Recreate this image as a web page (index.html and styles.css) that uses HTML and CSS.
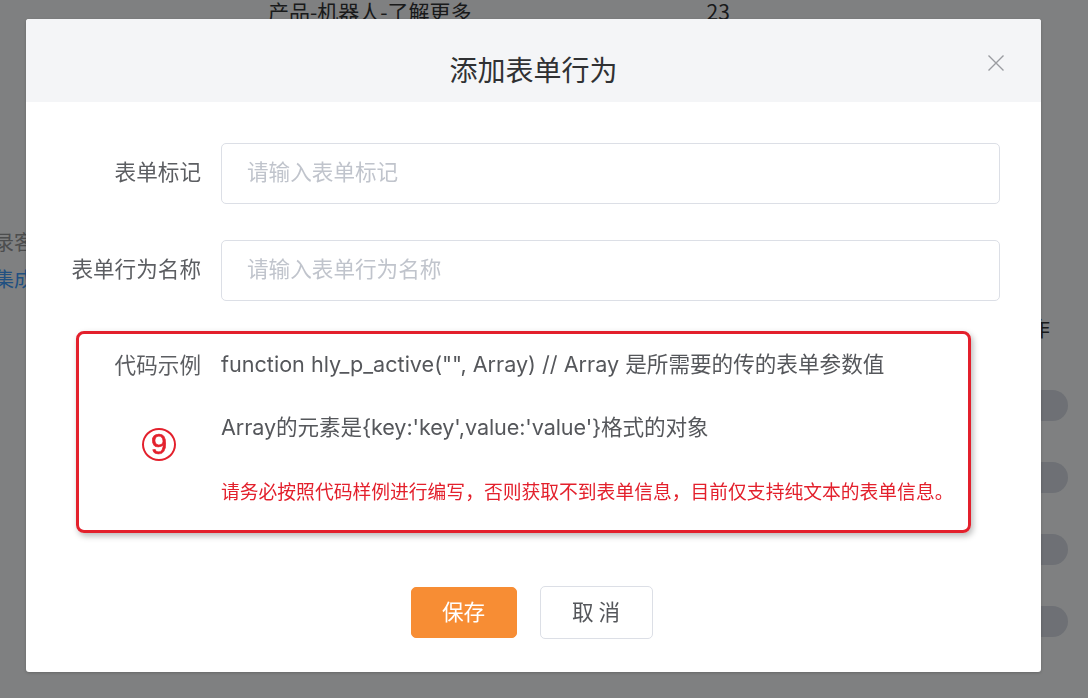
FILE: index.html
```html
<!DOCTYPE html>
<html lang="zh-CN">
<head>
<meta charset="utf-8">
<title>添加表单行为</title>
<link rel="stylesheet" href="styles.css">
</head>
<body>
<div class="page">
  <div class="top-row">
    <span class="cell-name">产品-机器人-了解更多</span>
    <span class="cell-count">23</span>
  </div>
  <div class="mid">
    <div class="left-col">
      <div class="left-gray">录客</div>
      <div class="left-blue">集成</div>
    </div>
    <div class="right-col">
      <div class="col-head">操作</div>
      <div class="pill"></div>
      <div class="pill"></div>
      <div class="pill"></div>
      <div class="pill"></div>
    </div>
  </div>
</div>

<div class="mask"></div>

<div class="dialog">
  <div class="dialog-header">
    <span class="dialog-title">添加表单行为</span>
    <button class="dialog-close" aria-label="关闭">
      <svg width="18" height="18" viewBox="0 0 18 18"><path d="M1.5 1.5L16.5 16.5M16.5 1.5L1.5 16.5" stroke="#9a9ca0" stroke-width="1.4" fill="none"/></svg>
    </button>
  </div>
  <div class="dialog-body">
    <div class="form-item">
      <label class="form-label">表单标记</label>
      <input class="form-input" type="text" placeholder="请输入表单标记">
    </div>
    <div class="form-item">
      <label class="form-label">表单行为名称</label>
      <input class="form-input" type="text" placeholder="请输入表单行为名称">
    </div>
    <div class="code-box">
      <div class="code-label-col">
        <div class="code-label">代码示例</div>
        <div class="circled" aria-label="⑨">9</div>
      </div>
      <div class="code-content">
        <div class="code-line">function hly_p_active("", Array) // Array 是所需要的传的表单参数值</div>
        <div class="code-line second">Array的元素是{key:'key',value:'value'}格式的对象</div>
        <div class="code-warn">请务必按照代码样例进行编写，否则获取不到表单信息，目前仅支持纯文本的表单信息。</div>
      </div>
    </div>
  </div>
  <div class="dialog-footer">
    <button class="btn btn-primary">保存</button>
    <button class="btn btn-default">取 消</button>
  </div>
</div>
</body>
</html>
```
FILE: styles.css
```css
* { box-sizing: border-box; }
html, body {
  margin: 0;
  padding: 0;
  width: 1088px;
  height: 698px;
  overflow: hidden;
  font-family: "Noto Sans CJK SC", "Liberation Sans", sans-serif;
}
.page {
  width: 1088px;
  height: 698px;
  background: #ffffff;
  overflow: hidden;
}
.top-row {
  display: flex;
  margin-top: -4px;
  padding-left: 268px;
  font-size: 21px;
  line-height: 30px;
  color: #333;
}
.cell-count { margin-left: 235px; }
.mid {
  display: flex;
  justify-content: space-between;
}
.left-col {
  margin-left: -6px;
  padding-top: 197px;
  font-size: 20px;
  line-height: 37px;
}
.left-gray { color: #999; }
.left-blue { color: #409eff; }
.right-col {
  display: flex;
  flex-direction: column;
  align-items: flex-end;
  padding-top: 286px;
  padding-right: 20px;
}
.col-head {
  font-size: 21px;
  line-height: 30px;
  color: #333;
  margin-right: 18px;
}
.pill {
  width: 62px;
  height: 31px;
  border-radius: 16px;
  background: #dcdfe6;
  margin-top: 41px;
}
.col-head + .pill { margin-top: 48px; }

.mask {
  position: fixed;
  inset: 0;
  background: rgba(0, 1, 4, 0.5);
}

.dialog {
  position: absolute;
  left: 26px;
  top: 19px;
  width: 1015px;
  height: 653px;
  background: #fff;
  border-radius: 3px;
  display: flex;
  flex-direction: column;
  box-shadow: 0 1px 3px rgba(0,0,0,0.2);
}
.dialog-header {
  height: 83px;
  background: #f4f5f7;
  display: flex;
  align-items: center;
  justify-content: center;
  position: relative;
  border-radius: 3px 3px 0 0;
}
.dialog-title {
  font-size: 28px;
  color: #303133;
  line-height: 36px;
  margin-top: 16px;
}
.dialog-close {
  position: absolute;
  right: 36px;
  top: 35px;
  border: 0;
  background: none;
  padding: 0;
  width: 18px;
  height: 18px;
}
.dialog-close svg { display: block; }

.dialog-body {
  padding-top: 41px;
  flex: 1;
}
.form-item {
  display: flex;
  align-items: flex-start;
  margin-bottom: 36px;
}
.form-label {
  width: 195px;
  padding-right: 20px;
  text-align: right;
  font-size: 21.6px;
  line-height: 55px;
  padding-bottom: 6px;
  color: #5c5e62;
  white-space: nowrap;
}
.form-input {
  width: 779px;
  height: 61px;
  border: 1px solid #dcdfe6;
  border-radius: 5px;
  padding: 0 25px 6px;
  font-family: "Noto Sans CJK SC", "Liberation Sans", sans-serif;
  font-size: 21.6px;
  color: #606266;
  outline: none;
}
.form-input::placeholder { color: #c0c4cc; }

.code-box {
  margin-left: 50px;
  margin-top: -6px;
  width: 895px;
  height: 202px;
  border: 3px solid #e3202c;
  border-radius: 8px;
  box-shadow: 2px 3px 6px rgba(0,0,0,0.28);
  display: flex;
  padding-top: 14px;
}
.code-label-col {
  width: 142px;
  padding-right: 20px;
  display: flex;
  flex-direction: column;
  align-items: flex-end;
}
.code-label {
  font-size: 21.6px;
  line-height: 32px;
  color: #5c5e62;
  white-space: nowrap;
}
.circled {
  align-self: flex-start;
  margin-left: 63px;
  margin-top: 48px;
  width: 34px;
  height: 33px;
  border: 2px solid #e3202c;
  border-radius: 50%;
  display: flex;
  align-items: center;
  justify-content: center;
  font-family: "Liberation Sans", sans-serif;
  font-size: 29px;
  line-height: 1;
  -webkit-text-stroke: 0.6px #e3202c;
  color: #e3202c;
}
.code-content {
  font-family: "Inter", "Noto Sans CJK SC", sans-serif;
  font-size: 21.6px;
  color: #55575b;
  white-space: nowrap;
}
.code-line { line-height: 32px; }
.code-line.second { margin-top: 31px; letter-spacing: -0.1px; }
.code-warn {
  font-family: "Noto Sans CJK SC", "Liberation Sans", sans-serif;
  margin-top: 36px;
  font-size: 18.8px;
  line-height: 24px;
  letter-spacing: 0;
  color: #e3202c;
}

.dialog-footer {
  display: flex;
  justify-content: center;
  gap: 23px;
  padding-bottom: 33px;
  padding-right: 4px;
  align-items: center;
}
.btn {
  font-family: "Noto Sans CJK SC", "Liberation Sans", sans-serif;
  font-size: 21.6px;
  border-radius: 5px;
  cursor: pointer;
  padding: 0 0 5px;
}
.btn-primary {
  width: 106px;
  height: 51px;
  background: #f78d34;
  border: 1px solid #f78d34;
  color: #fff;
}
.btn-default {
  width: 113px;
  height: 53px;
  background: #fff;
  border: 1px solid #dcdfe6;
  color: #55575b;
}
```
